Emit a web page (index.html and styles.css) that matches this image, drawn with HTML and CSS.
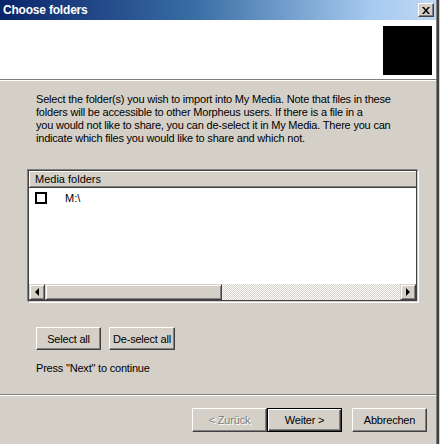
FILE: index.html
```html
<!DOCTYPE html>
<html lang="en">
<head>
    <meta charset="UTF-8">
    <title>Choose folders</title>
    <link rel="stylesheet" href="styles.css">
</head>
<body>
    <div class="window">
        <div class="titlebar">
            <span class="title">Choose folders</span>
            <span class="close-btn">
                <svg width="8" height="7" viewBox="0 0 8 7"><path d="M0 0h2l2 2.5 2-2.5h2l-3 3.5 3 3.5h-2l-2-2.5-2 2.5h-2l3-3.5z" fill="#000"/></svg>
            </span>
        </div>

        <div class="header">
            <div class="logo"></div>
        </div>
        <div class="separator"></div>

        <div class="content">
            <p class="intro">
                Select the folder(s) you wish to import into My Media. Note that files in these<br>
                folders will be accessible to other Morpheus users. If there is a file in a<br>
                you would not like to share, you can de-select it in My Media. There you can<br>
                indicate which files you would like to share and which not.
            </p>

            <div class="list">
                <div class="list-header">Media folders</div>
                <div class="list-body">
                    <div class="list-row">
                        <span class="checkbox"></span>
                        <span class="row-label">M:\</span>
                    </div>
                </div>
                <div class="hscroll">
                    <span class="scroll-btn"><span class="arrow-left"></span></span>
                    <span class="scroll-thumb"></span>
                    <span class="scroll-track"></span>
                    <span class="scroll-btn"><span class="arrow-right"></span></span>
                </div>
            </div>

            <div class="select-buttons">
                <button class="btn btn-select">Select all</button>
                <button class="btn btn-deselect">De-select all</button>
            </div>

            <p class="hint">Press "Next" to continue</p>
        </div>

        <div class="separator"></div>
        <div class="footer">
            <button class="btn btn-nav disabled">&lt; Zurück</button>
            <button class="btn btn-nav default">Weiter &gt;</button>
            <button class="btn btn-nav btn-cancel">Abbrechen</button>
        </div>
    </div>
</body>
</html>
```

FILE: styles.css
```css
body {
    margin: 0;
    width: 440px;
    height: 444px;
    overflow: hidden;
    background-color: #d4d0c8;
    font-family: "Liberation Sans", Arial, sans-serif;
    font-size: 11px;
    color: #000;
}

.window {
    width: 436px;
    height: 444px;
    display: flex;
    flex-direction: column;
    border-right: 1px solid #808080;
    box-shadow: 2px 0 0 #404040;
    background-color: #d4d0c8;
}

/* Title bar */
.titlebar {
    height: 20px;
    flex-shrink: 0;
    display: flex;
    align-items: center;
    justify-content: space-between;
    padding: 0 2px 0 3px;
    background: linear-gradient(to right, #0a246a 0%, #3a6ea5 45%, #a6caf0 85%, #c0d8f4 100%);
}

.title {
    color: #fff;
    font-weight: bold;
    font-size: 12px;
    letter-spacing: -0.2px;
}

.close-btn {
    width: 16px;
    height: 14px;
    box-sizing: border-box;
    display: flex;
    align-items: center;
    justify-content: center;
    background-color: #d4d0c8;
    border: 1px solid;
    border-color: #fff #404040 #404040 #fff;
    box-shadow: inset -1px -1px 0 #808080;
}

/* White header strip */
.header {
    height: 59px;
    flex-shrink: 0;
    background-color: #fff;
    display: flex;
    justify-content: flex-end;
    padding: 6px 4px 0 0;
    box-sizing: border-box;
}

.logo {
    width: 49px;
    height: 49px;
    background-color: #000;
}

.separator {
    flex-shrink: 0;
    border-top: 1px solid #808080;
    border-bottom: 1px solid #fff;
}

/* Main content */
.content {
    flex: 1;
    padding: 12px 0 0 28px;
}

.intro {
    margin: 0 0 0 8px;
    line-height: 13px;
    white-space: nowrap;
    letter-spacing: -0.2px;
}

.list {
    margin-top: 25px;
    width: 390px;
    height: 132px;
    box-sizing: border-box;
    display: flex;
    flex-direction: column;
    background-color: #fff;
    border: 1px solid #404040;
    border-right-color: #d4d0c8;
    border-bottom-color: #d4d0c8;
    box-shadow: -1px -1px 0 #808080, 1px 1px 0 #fff, inset -1px -1px 0 #404040;
}

.list-header {
    height: 17px;
    flex-shrink: 0;
    box-sizing: border-box;
    padding: 2px 0 0 6px;
    background-color: #d4d0c8;
    border-bottom: 1px solid #404040;
    box-shadow: inset 1px 1px 0 #fff, inset 0 -1px 0 #808080;
    margin-right: 1px;
}

.list-body {
    flex: 1;
}

.list-row {
    display: flex;
    align-items: center;
    height: 19px;
    padding-left: 6px;
}

.checkbox {
    width: 12px;
    height: 12px;
    box-sizing: border-box;
    border: 2px solid #000;
    background-color: #fff;
}

.row-label {
    margin-left: 18px;
}

/* Horizontal scrollbar */
.hscroll {
    height: 16px;
    flex-shrink: 0;
    display: flex;
    margin: 0 1px 1px 0;
}

.scroll-btn,
.scroll-thumb {
    box-sizing: border-box;
    background-color: #d4d0c8;
    border: 1px solid;
    border-color: #d4d0c8 #404040 #404040 #d4d0c8;
    box-shadow: inset 1px 1px 0 #fff, inset -1px -1px 0 #808080;
}

.scroll-btn {
    width: 16px;
    display: flex;
    align-items: center;
    justify-content: center;
}

.scroll-thumb {
    width: 177px;
}

.scroll-track {
    flex: 1;
    background-color: #fff;
    background-image: repeating-conic-gradient(#d4d0c8 0 25%, #fff 0 50%);
    background-size: 2px 2px;
}

.arrow-left {
    width: 0;
    height: 0;
    border-top: 4px solid transparent;
    border-bottom: 4px solid transparent;
    border-right: 4px solid #000;
}

.arrow-right {
    width: 0;
    height: 0;
    border-top: 4px solid transparent;
    border-bottom: 4px solid transparent;
    border-left: 4px solid #000;
}

/* Buttons */
.btn {
    height: 23px;
    box-sizing: border-box;
    padding: 0;
    font-family: "Liberation Sans", Arial, sans-serif;
    font-size: 11px;
    color: #000;
    background-color: #d4d0c8;
    border: 1px solid;
    border-color: #fff #404040 #404040 #fff;
    box-shadow: inset -1px -1px 0 #808080;
    letter-spacing: -0.2px;
}

.select-buttons {
    display: flex;
    gap: 8px;
    margin: 25px 0 0 8px;
}

.btn-select {
    width: 65px;
}

.btn-deselect {
    width: 66px;
}

.hint {
    margin: 12px 0 0 8px;
    letter-spacing: -0.2px;
}

/* Footer */
.footer {
    height: 48px;
    flex-shrink: 0;
    box-sizing: border-box;
    display: flex;
    justify-content: flex-end;
    padding: 12px 9px 0 0;
}

.btn-nav {
    width: 75px;
    height: 24px;
}

.disabled {
    color: #808080;
    text-shadow: 1px 1px 0 #fff;
}

.default {
    border: 1px solid #000;
    box-shadow: inset 1px 1px 0 #fff, inset -1px -1px 0 #404040, inset -2px -2px 0 #808080;
}

.btn-cancel {
    margin-left: 10px;
}
```
